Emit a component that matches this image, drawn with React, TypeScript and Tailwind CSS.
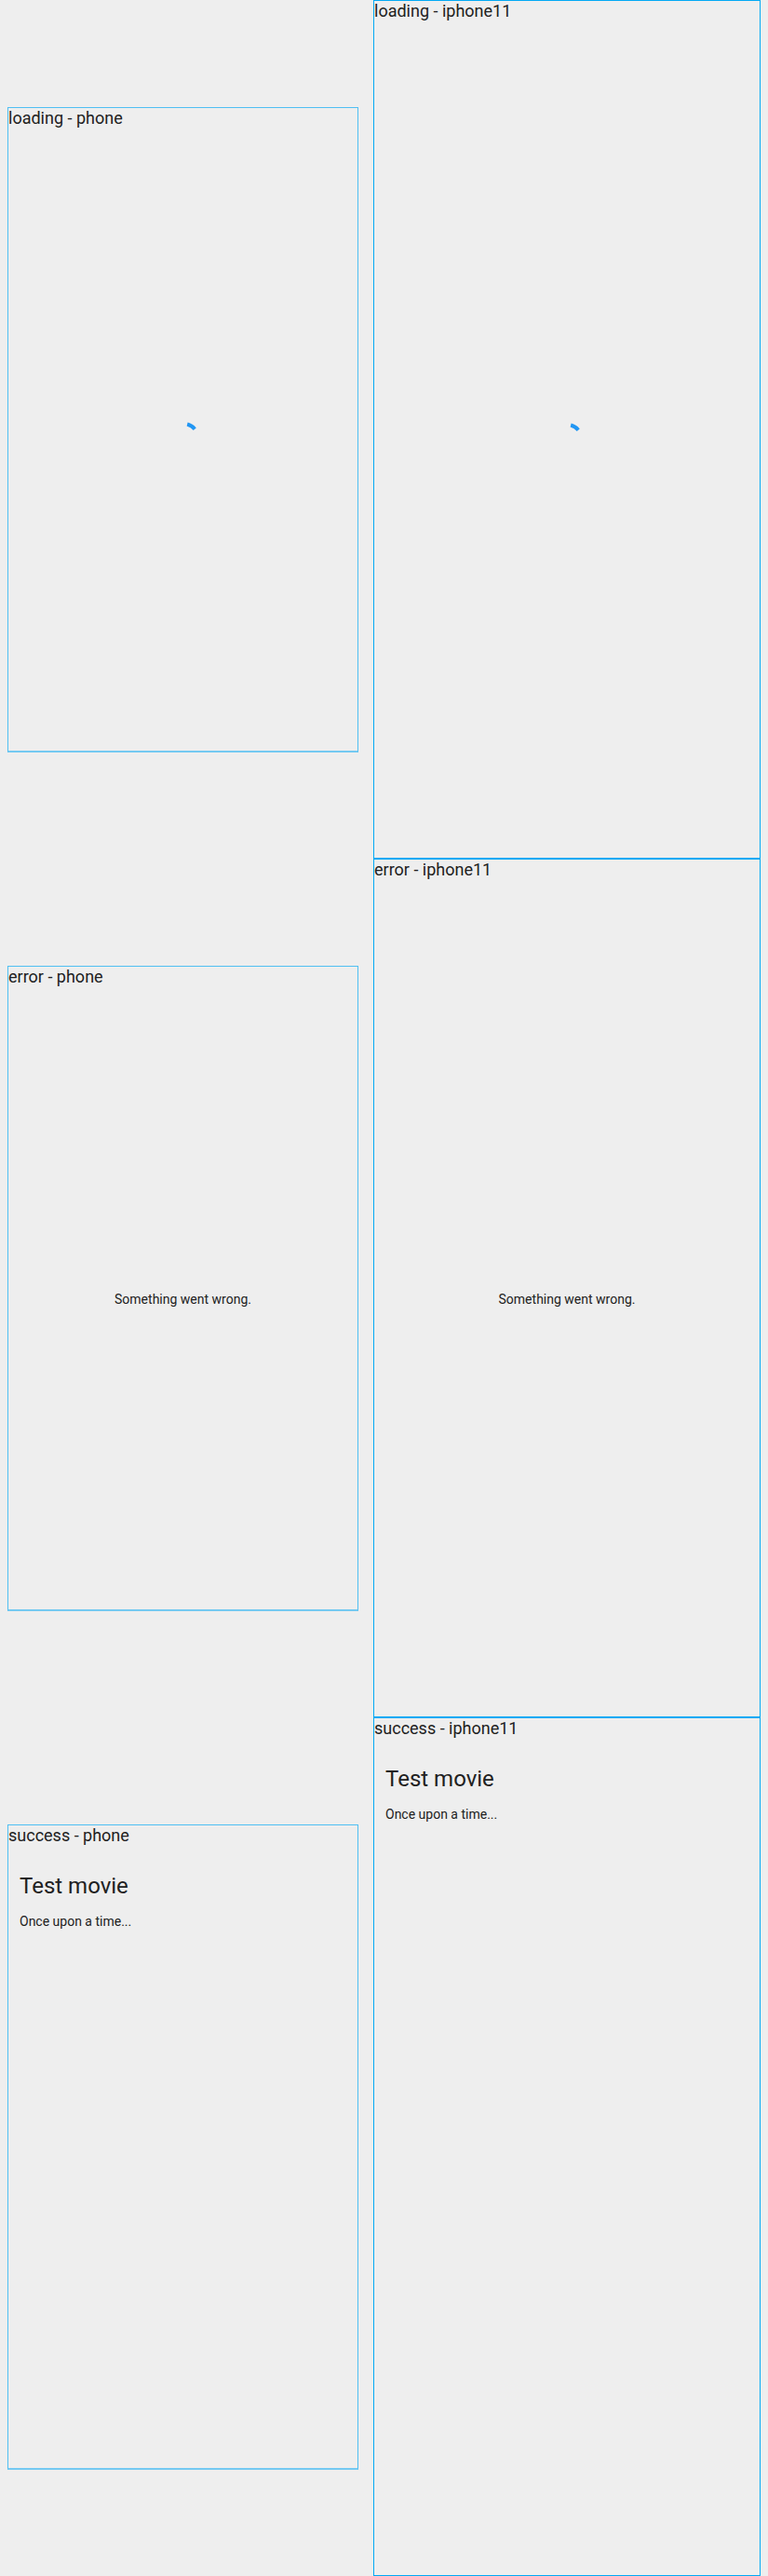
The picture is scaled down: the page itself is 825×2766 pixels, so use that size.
import React from "react";

const font = { fontFamily: "Roboto, 'Noto Sans', sans-serif" };

function Spinner() {
  // arc from ~15deg to ~50deg clockwise from top, r=16, stroke 4
  const r = 16;
  const cx = 18;
  const cy = 18;
  const a1 = (15 * Math.PI) / 180;
  const a2 = (50 * Math.PI) / 180;
  const x1 = cx + r * Math.sin(a1);
  const y1 = cy - r * Math.cos(a1);
  const x2 = cx + r * Math.sin(a2);
  const y2 = cy - r * Math.cos(a2);
  return (
    <svg width="36" height="36" viewBox="0 0 36 36" className="-mt-[3px]">
      <path
        d={`M ${x1} ${y1} A ${r} ${r} 0 0 1 ${x2} ${y2}`}
        stroke="#2196f3"
        strokeWidth="4"
        fill="none"
        strokeLinecap="butt"
      />
    </svg>
  );
}

function Loading() {
  return (
    <div className="flex-1 flex items-center justify-center">
      <Spinner />
    </div>
  );
}

function ErrorView() {
  return (
    <div className="flex-1 flex items-center justify-center">
      <span className="text-[14px] leading-[16px] text-[#212121]">Something went wrong.</span>
    </div>
  );
}

function Success() {
  return (
    <div className="flex-1 flex flex-col pl-[12px] pt-[27px]">
      <div className="text-[24px] leading-[28px] text-[#212121]">Test movie</div>
      <div className="mt-[16px] text-[14px] leading-[16px] text-[#212121]">Once upon a time...</div>
    </div>
  );
}

function Label({ text }: { text: string }) {
  return (
    <div className="h-[24px] shrink-0 text-[18px] leading-[21px] text-[#212121] whitespace-nowrap">
      {text}
    </div>
  );
}

function PhoneFrame({ label, children }: { label: string; children: React.ReactNode }) {
  return (
    <div className="w-[377px] h-[693px] flex flex-col border-t border-x border-b-2 border-[#4fbff2] border-b-[#74c9f1]">
      <Label text={label} />
      {children}
    </div>
  );
}

function IphoneFrame({ label, children }: { label: string; children: React.ReactNode }) {
  return (
    <div className="w-[416px] h-[922px] flex flex-col border border-[#03a9f4]">
      <Label text={label} />
      {children}
    </div>
  );
}

export default function App() {
  const rows: { name: string; view: () => React.ReactNode }[] = [
    { name: "loading", view: () => <Loading /> },
    { name: "error", view: () => <ErrorView /> },
    { name: "success", view: () => <Success /> },
  ];
  return (
    <div className="w-[825px] h-[2766px] bg-[#eeeeee] grid grid-cols-[393px_432px]" style={font}>
      {rows.map((r) => (
        <React.Fragment key={r.name}>
          <div className="h-[922px] flex items-center pl-[8px]">
            <PhoneFrame label={`${r.name} - phone`}>{r.view()}</PhoneFrame>
          </div>
          <div className="h-[922px] pl-[8px]">
            <IphoneFrame label={`${r.name} - iphone11`}>{r.view()}</IphoneFrame>
          </div>
        </React.Fragment>
      ))}
    </div>
  );
}
